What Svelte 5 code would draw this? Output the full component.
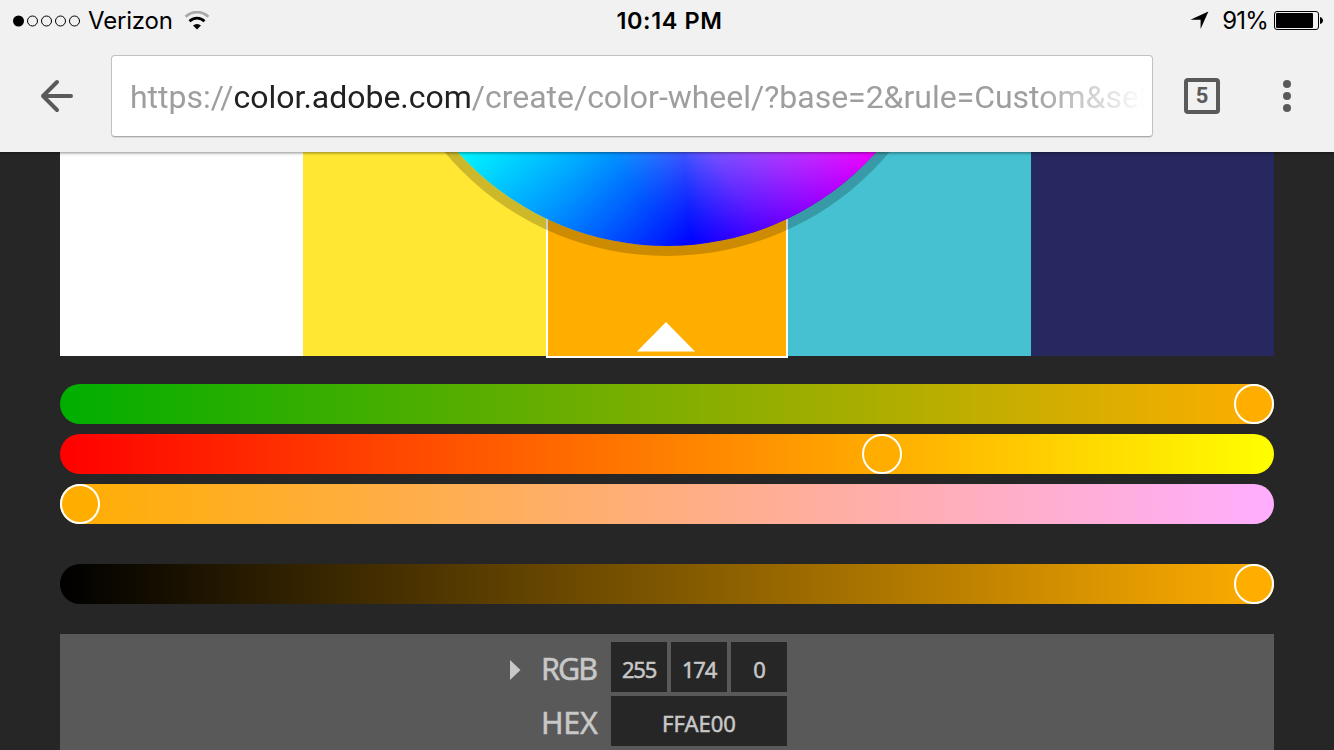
<script>
  const swatches = ['#ffffff', '#ffe734', '#ffae00', '#46c1d1', '#26285f'];
  const sliders = [
    { from: '#00ae00', to: '#ffae00', value: 1 },
    { from: '#ff0000', to: '#ffff00', value: 0.6832 },
    { from: '#ffae00', to: '#ffaeff', value: 0 },
    { from: '#000000', to: '#ffae00', value: 1, last: true }
  ];
  const rgb = [255, 174, 0];
</script>

<div class="screen">
  <header>
    <div class="status">
      <div class="left">
        <svg class="signal" width="68" height="12" viewBox="0 0 68 12">
          <circle cx="5.5" cy="6" r="5.5" fill="#000" />
          {#each [19.5, 33.5, 47.5, 61.5] as x}
            <circle cx={x} cy="6" r="5" fill="none" stroke="#000" stroke-width="1" />
          {/each}
        </svg>
        <span class="carrier">Verizon</span>
        <svg class="wifi" width="26" height="20" viewBox="0 0 26 20" fill="none">
          <path d="M1.6 5.8a16.2 16.2 0 0 1 22.8 0" stroke="#a9a9a9" stroke-width="2.7" />
          <path d="M5.5 10.2a10.6 10.6 0 0 1 15 0" stroke="#000" stroke-width="2.8" />
          <path d="M9 14.5a5.8 5.8 0 0 1 8 0L13 18.6z" fill="#000" />
        </svg>
      </div>
      <div class="time">10:14 PM</div>
      <div class="right">
        <svg class="location" width="19" height="19" viewBox="0 0 19 19"><path d="M18.4.4 10.6 18V8.8H.4z" fill="#000" /></svg>
        <span class="percent">91%</span>
        <svg class="battery" width="49" height="19" viewBox="0 0 49 19">
          <rect x=".5" y=".5" width="44" height="18" rx="2.5" fill="none" stroke="#000" />
          <rect x="2" y="2" width="37" height="15" rx="1" />
          <path d="M46 6c4 1 4 6 0 7z" />
        </svg>
      </div>
    </div>
    <div class="toolbar">
      <svg class="back" width="34" height="34" viewBox="0 0 34 34" fill="none" stroke="#5a5a5a" stroke-width="4" stroke-linecap="round" stroke-linejoin="round">
        <path d="M31 17H3M17 3 3 17l14 14" />
      </svg>
      <div class="address"><span>https://<b>color.adobe.com</b>/create/color-wheel/?base=2&amp;rule=Custom&amp;sel</span></div>
      <div class="tabs">5</div>
      <div class="menu"><i></i><i></i><i></i></div>
    </div>
  </header>

  <main>
    <section class="palette">
      {#each swatches as color, i}
        <div class="swatch" class:selected={i === 2} style="background-color: {color}">
          {#if i === 2}
            <svg width="58" height="30" viewBox="0 0 58 30"><path d="M29 0 58 29.5H0z" fill="#fff" /></svg>
          {/if}
        </div>
      {/each}
      <div class="wheel"></div>
    </section>

    <section class="sliders">
      {#each sliders as s}
        <div class="slider" class:last={s.last} style="background-image: linear-gradient(90deg, {s.from}, {s.to})">
          <div class="knob" style="margin-left: calc((100% - 40px) * {s.value})"></div>
        </div>
      {/each}
    </section>

    <section class="values">
      <svg class="arrow" width="11" height="20" viewBox="0 0 11 20"><path d="M0 0 10.5 10 0 20z" fill="#c8c8c8" /></svg>
      <span class="name">RGB</span>
      <div class="fields">
        {#each rgb as v}<div class="field"><span>{v}</span></div>{/each}
      </div>
      <span class="name hex">HEX</span>
      <div class="field code"><span>FFAE00</span></div>
    </section>
  </main>
</div>

<style>
  :global(body) { margin: 0; background: #262626; }
  .screen { width: 1334px; height: 750px; overflow: hidden; display: flex; flex-direction: column; background: #262626; }
  header { position: relative; z-index: 2; height: 152px; flex: none; background: #f1f1f1; box-shadow: 0 1px 3px rgba(0, 0, 0, 0.45); }
  .status { height: 41px; display: grid; grid-template-columns: 1fr auto 1fr; align-items: center; font: 24px/41px Inter, sans-serif; color: #000; }
  .left { display: flex; align-items: center; padding-left: 13px; }
  .carrier { margin-left: 7px; letter-spacing: -0.2px; }
  .wifi { margin-left: 11px; }
  .time { font-weight: 600; font-size: 23.5px; padding-left: 5px; letter-spacing: 0.6px; }
  .right { display: flex; align-items: center; justify-content: flex-end; padding-right: 11px; }
  .location { margin-right: 1px; }
  .percent { margin: 0 6px 0 12px; letter-spacing: -0.8px; }
  .toolbar { display: flex; align-items: center; height: 82px; padding: 14px 43px 0 40px; }
  .back { flex: none; }
  .address { margin-left: 37px; width: 1040px; height: 80px; flex: none; border: 1px solid #c2c2c2; border-bottom-color: #aaa; border-radius: 4px; background: #fff; box-shadow: 0 1px 1px rgba(0, 0, 0, 0.1); }
  .address span { display: block; margin: 0 5px 0 18px; overflow: hidden; white-space: nowrap; letter-spacing: -0.02px; font: 32px/83px Roboto, sans-serif; color: #9e9e9e; -webkit-mask-image: linear-gradient(90deg, #000 calc(100% - 115px), transparent calc(100% - 2px)); mask-image: linear-gradient(90deg, #000 calc(100% - 115px), transparent calc(100% - 2px)); }
  .address b { font-weight: 400; color: #212121; }
  .tabs { box-sizing: border-box; width: 36px; height: 36px; margin-left: 31px; border: 4px solid #5a5a5a; border-radius: 4px; text-align: center; font: 700 22px/28px Roboto, sans-serif; color: #5a5a5a; }
  .menu { margin-left: auto; display: grid; gap: 4px; }
  .menu i { width: 8px; height: 8px; border-radius: 50%; background: #5a5a5a; }
  main { flex: 1; padding: 0 60px; }
  .palette { position: relative; height: 204px; display: grid; grid-template-columns: 243px 243px 242px 243px 243px; grid-template-rows: 204px; }
  .swatch { display: flex; justify-content: center; align-items: flex-end; }
  .selected { box-sizing: border-box; height: 206px; border: 2px solid #fff; border-top: 0; }
  .selected svg { margin: 0 2px 4px 0; }
  .wheel { position: absolute; left: 327px; top: -466px; width: 560px; height: 560px; border-radius: 50%; isolation: isolate; box-shadow: 0 0 0 10px rgba(0, 0, 0, 0.2);
    background: radial-gradient(closest-side, #0ff, #000), conic-gradient(#f00 0deg, #f0f 129deg, #80f 151deg, #00f 175deg, #0090ff 205deg, #0ff 230deg, #0f0 280deg, #ff0 320deg, #f00 360deg); background-blend-mode: screen, normal; }
  .wheel::after { content: ""; position: absolute; inset: 0; border-radius: 50%; mix-blend-mode: screen; background: radial-gradient(closest-side, #f00, #000); -webkit-mask-image: linear-gradient(53deg, transparent 29.5%, #000 40%); mask-image: linear-gradient(53deg, transparent 29.5%, #000 40%); }
  .sliders { padding-top: 28px; }
  .slider { height: 40px; margin-bottom: 10px; border-radius: 20px; }
  .last { margin: 40px 0 30px; }
  .knob { box-sizing: border-box; width: 40px; height: 40px; border: 2px solid #fff; border-radius: 50%; background: #ffae00; }
  .values { height: 108px; padding: 8px 0 0 450px; background: #595959; display: grid; grid-template-columns: 31px 70px 176px; grid-template-rows: 50px 50px; row-gap: 4px; align-items: center; color: #c8c8c8; -webkit-text-stroke: 0.5px #c8c8c8; }
  .arrow { margin-top: 5px; }
  .name { font: 30.5px/50px "Noto Sans", sans-serif; padding-top: 2px; letter-spacing: -2px; }
  .hex { grid-column: 2; letter-spacing: -0.3px; }
  .fields { display: grid; grid-template-columns: repeat(3, 56px); gap: 4px; }
  .field { height: 50px; background: #262626; text-align: center; font: 22px/55px "Noto Sans", sans-serif; letter-spacing: -1.2px; }
  .code { letter-spacing: 0; }
</style>
